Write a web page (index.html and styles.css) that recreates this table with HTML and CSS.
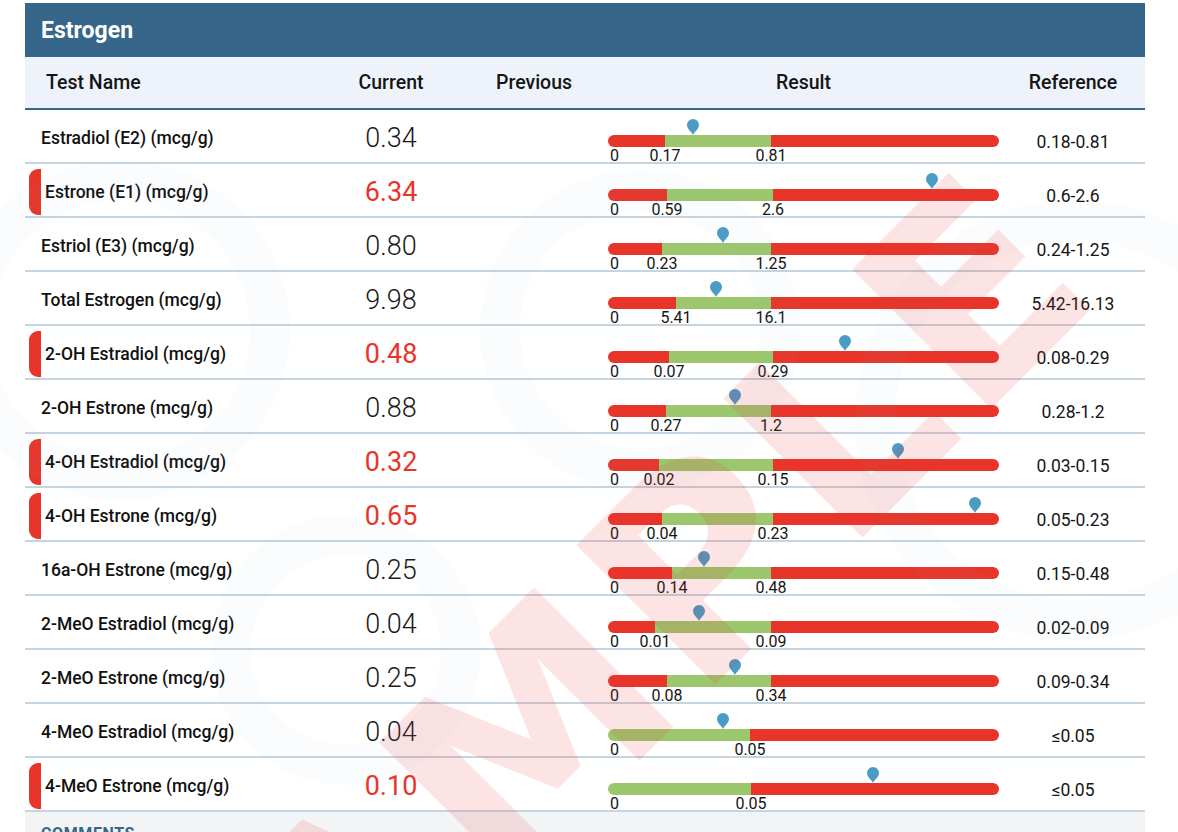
FILE: index.html
```html
<!DOCTYPE html>
<html lang="en">
<head>
<meta charset="utf-8">
<title>Estrogen</title>
<link rel="stylesheet" href="styles.css">
</head>
<body>
<div class="page">
  <section class="panel">
    <div class="panel-title">Estrogen</div>
    <div class="thead">
      <div class="th th-name">Test Name</div>
      <div class="th th-current">Current</div>
      <div class="th th-previous">Previous</div>
      <div class="th th-result">Result</div>
      <div class="th th-ref">Reference</div>
    </div>

    <div class="row">
      <div class="name"><span class="flag"></span><span class="name-text">Estradiol (E2) (mcg/g)</span></div>
      <div class="value">0.34</div>
      <div class="prev"></div>
      <div class="result"><div class="track">
        <div class="pins"><svg class="pin" style="left:85px" viewBox="0 0 12 16"><path d="M6 16C5 13 0 10.5 0 6A6 6 0 0 1 12 6C12 10.5 7 13 6 16Z"/></svg></div>
        <div class="bar"><span class="seg red" style="width:57px"></span><span class="seg green" style="width:106px"></span><span class="seg red rest"></span></div>
        <div class="ticks"><span class="tick zero">0</span><span class="tick" style="left:57px">0.17</span><span class="tick" style="left:163px">0.81</span></div>
      </div></div>
      <div class="ref">0.18-0.81</div>
    </div>

    <div class="row">
      <div class="name high-row"><span class="flag on"></span><span class="name-text">Estrone (E1) (mcg/g)</span></div>
      <div class="value high">6.34</div>
      <div class="prev"></div>
      <div class="result"><div class="track">
        <div class="pins"><svg class="pin" style="left:324px" viewBox="0 0 12 16"><path d="M6 16C5 13 0 10.5 0 6A6 6 0 0 1 12 6C12 10.5 7 13 6 16Z"/></svg></div>
        <div class="bar"><span class="seg red" style="width:59px"></span><span class="seg green" style="width:106px"></span><span class="seg red rest"></span></div>
        <div class="ticks"><span class="tick zero">0</span><span class="tick" style="left:59px">0.59</span><span class="tick" style="left:165px">2.6</span></div>
      </div></div>
      <div class="ref">0.6-2.6</div>
    </div>

    <div class="row">
      <div class="name"><span class="flag"></span><span class="name-text">Estriol (E3) (mcg/g)</span></div>
      <div class="value">0.80</div>
      <div class="prev"></div>
      <div class="result"><div class="track">
        <div class="pins"><svg class="pin" style="left:115px" viewBox="0 0 12 16"><path d="M6 16C5 13 0 10.5 0 6A6 6 0 0 1 12 6C12 10.5 7 13 6 16Z"/></svg></div>
        <div class="bar"><span class="seg red" style="width:54px"></span><span class="seg green" style="width:109px"></span><span class="seg red rest"></span></div>
        <div class="ticks"><span class="tick zero">0</span><span class="tick" style="left:54px">0.23</span><span class="tick" style="left:163px">1.25</span></div>
      </div></div>
      <div class="ref">0.24-1.25</div>
    </div>

    <div class="row">
      <div class="name"><span class="flag"></span><span class="name-text">Total Estrogen (mcg/g)</span></div>
      <div class="value">9.98</div>
      <div class="prev"></div>
      <div class="result"><div class="track">
        <div class="pins"><svg class="pin" style="left:108px" viewBox="0 0 12 16"><path d="M6 16C5 13 0 10.5 0 6A6 6 0 0 1 12 6C12 10.5 7 13 6 16Z"/></svg></div>
        <div class="bar"><span class="seg red" style="width:68px"></span><span class="seg green" style="width:95px"></span><span class="seg red rest"></span></div>
        <div class="ticks"><span class="tick zero">0</span><span class="tick" style="left:68px">5.41</span><span class="tick" style="left:163px">16.1</span></div>
      </div></div>
      <div class="ref">5.42-16.13</div>
    </div>

    <div class="row">
      <div class="name high-row"><span class="flag on"></span><span class="name-text">2-OH Estradiol (mcg/g)</span></div>
      <div class="value high">0.48</div>
      <div class="prev"></div>
      <div class="result"><div class="track">
        <div class="pins"><svg class="pin" style="left:237px" viewBox="0 0 12 16"><path d="M6 16C5 13 0 10.5 0 6A6 6 0 0 1 12 6C12 10.5 7 13 6 16Z"/></svg></div>
        <div class="bar"><span class="seg red" style="width:61px"></span><span class="seg green" style="width:104px"></span><span class="seg red rest"></span></div>
        <div class="ticks"><span class="tick zero">0</span><span class="tick" style="left:61px">0.07</span><span class="tick" style="left:165px">0.29</span></div>
      </div></div>
      <div class="ref">0.08-0.29</div>
    </div>

    <div class="row">
      <div class="name"><span class="flag"></span><span class="name-text">2-OH Estrone (mcg/g)</span></div>
      <div class="value">0.88</div>
      <div class="prev"></div>
      <div class="result"><div class="track">
        <div class="pins"><svg class="pin" style="left:127px" viewBox="0 0 12 16"><path d="M6 16C5 13 0 10.5 0 6A6 6 0 0 1 12 6C12 10.5 7 13 6 16Z"/></svg></div>
        <div class="bar"><span class="seg red" style="width:58px"></span><span class="seg green" style="width:105px"></span><span class="seg red rest"></span></div>
        <div class="ticks"><span class="tick zero">0</span><span class="tick" style="left:58px">0.27</span><span class="tick" style="left:163px">1.2</span></div>
      </div></div>
      <div class="ref">0.28-1.2</div>
    </div>

    <div class="row">
      <div class="name high-row"><span class="flag on"></span><span class="name-text">4-OH Estradiol (mcg/g)</span></div>
      <div class="value high">0.32</div>
      <div class="prev"></div>
      <div class="result"><div class="track">
        <div class="pins"><svg class="pin" style="left:290px" viewBox="0 0 12 16"><path d="M6 16C5 13 0 10.5 0 6A6 6 0 0 1 12 6C12 10.5 7 13 6 16Z"/></svg></div>
        <div class="bar"><span class="seg red" style="width:51px"></span><span class="seg green" style="width:114px"></span><span class="seg red rest"></span></div>
        <div class="ticks"><span class="tick zero">0</span><span class="tick" style="left:51px">0.02</span><span class="tick" style="left:165px">0.15</span></div>
      </div></div>
      <div class="ref">0.03-0.15</div>
    </div>

    <div class="row">
      <div class="name high-row"><span class="flag on"></span><span class="name-text">4-OH Estrone (mcg/g)</span></div>
      <div class="value high">0.65</div>
      <div class="prev"></div>
      <div class="result"><div class="track">
        <div class="pins"><svg class="pin" style="left:367px" viewBox="0 0 12 16"><path d="M6 16C5 13 0 10.5 0 6A6 6 0 0 1 12 6C12 10.5 7 13 6 16Z"/></svg></div>
        <div class="bar"><span class="seg red" style="width:54px"></span><span class="seg green" style="width:111px"></span><span class="seg red rest"></span></div>
        <div class="ticks"><span class="tick zero">0</span><span class="tick" style="left:54px">0.04</span><span class="tick" style="left:165px">0.23</span></div>
      </div></div>
      <div class="ref">0.05-0.23</div>
    </div>

    <div class="row">
      <div class="name"><span class="flag"></span><span class="name-text">16a-OH Estrone (mcg/g)</span></div>
      <div class="value">0.25</div>
      <div class="prev"></div>
      <div class="result"><div class="track">
        <div class="pins"><svg class="pin" style="left:96px" viewBox="0 0 12 16"><path d="M6 16C5 13 0 10.5 0 6A6 6 0 0 1 12 6C12 10.5 7 13 6 16Z"/></svg></div>
        <div class="bar"><span class="seg red" style="width:64px"></span><span class="seg green" style="width:99px"></span><span class="seg red rest"></span></div>
        <div class="ticks"><span class="tick zero">0</span><span class="tick" style="left:64px">0.14</span><span class="tick" style="left:163px">0.48</span></div>
      </div></div>
      <div class="ref">0.15-0.48</div>
    </div>

    <div class="row">
      <div class="name"><span class="flag"></span><span class="name-text">2-MeO Estradiol (mcg/g)</span></div>
      <div class="value">0.04</div>
      <div class="prev"></div>
      <div class="result"><div class="track">
        <div class="pins"><svg class="pin" style="left:91px" viewBox="0 0 12 16"><path d="M6 16C5 13 0 10.5 0 6A6 6 0 0 1 12 6C12 10.5 7 13 6 16Z"/></svg></div>
        <div class="bar"><span class="seg red" style="width:47px"></span><span class="seg green" style="width:116px"></span><span class="seg red rest"></span></div>
        <div class="ticks"><span class="tick zero">0</span><span class="tick" style="left:47px">0.01</span><span class="tick" style="left:163px">0.09</span></div>
      </div></div>
      <div class="ref">0.02-0.09</div>
    </div>

    <div class="row">
      <div class="name"><span class="flag"></span><span class="name-text">2-MeO Estrone (mcg/g)</span></div>
      <div class="value">0.25</div>
      <div class="prev"></div>
      <div class="result"><div class="track">
        <div class="pins"><svg class="pin" style="left:127px" viewBox="0 0 12 16"><path d="M6 16C5 13 0 10.5 0 6A6 6 0 0 1 12 6C12 10.5 7 13 6 16Z"/></svg></div>
        <div class="bar"><span class="seg red" style="width:59px"></span><span class="seg green" style="width:104px"></span><span class="seg red rest"></span></div>
        <div class="ticks"><span class="tick zero">0</span><span class="tick" style="left:59px">0.08</span><span class="tick" style="left:163px">0.34</span></div>
      </div></div>
      <div class="ref">0.09-0.34</div>
    </div>

    <div class="row">
      <div class="name"><span class="flag"></span><span class="name-text">4-MeO Estradiol (mcg/g)</span></div>
      <div class="value">0.04</div>
      <div class="prev"></div>
      <div class="result"><div class="track">
        <div class="pins"><svg class="pin" style="left:115px" viewBox="0 0 12 16"><path d="M6 16C5 13 0 10.5 0 6A6 6 0 0 1 12 6C12 10.5 7 13 6 16Z"/></svg></div>
        <div class="bar"><span class="seg green" style="width:142px"></span><span class="seg red rest"></span></div>
        <div class="ticks"><span class="tick zero">0</span><span class="tick" style="left:142px">0.05</span></div>
      </div></div>
      <div class="ref">≤0.05</div>
    </div>

    <div class="row">
      <div class="name high-row"><span class="flag on"></span><span class="name-text">4-MeO Estrone (mcg/g)</span></div>
      <div class="value high">0.10</div>
      <div class="prev"></div>
      <div class="result"><div class="track">
        <div class="pins"><svg class="pin" style="left:265px" viewBox="0 0 12 16"><path d="M6 16C5 13 0 10.5 0 6A6 6 0 0 1 12 6C12 10.5 7 13 6 16Z"/></svg></div>
        <div class="bar"><span class="seg green" style="width:143px"></span><span class="seg red rest"></span></div>
        <div class="ticks"><span class="tick zero">0</span><span class="tick" style="left:143px">0.05</span></div>
      </div></div>
      <div class="ref">≤0.05</div>
    </div>

    <div class="comments">
      <div class="comments-title">COMMENTS</div>
    </div>
  </section>
</div>

<svg class="watermark" width="1178" height="832" viewBox="0 0 1178 832" aria-hidden="true">
  <g class="wm-rings">
    <circle cx="640" cy="330" r="140"/>
    <circle cx="1075" cy="420" r="200"/>
    <circle cx="346" cy="650" r="115"/>
    <circle cx="120" cy="330" r="150"/>
  </g>
  <text class="wm-text" x="0" y="0" transform="translate(201.5 1198.5) rotate(-45)">SAMPLE</text>
</svg>
</body>
</html>
```

FILE: styles.css
```css
* {
  box-sizing: border-box;
}

html, body {
  margin: 0;
  padding: 0;
  background: #ffffff;
}

body {
  position: relative;
  width: 1178px;
  height: 832px;
  overflow: hidden;
  font-family: Roboto, "Noto Sans", "Liberation Sans", sans-serif;
  color: #161616;
}

.page {
  padding: 3px 0 0 25px;
}

.panel {
  width: 1120px;
}

.panel-title {
  height: 54px;
  display: flex;
  align-items: center;
  padding-left: 16px;
  background: #36678a;
  color: #ffffff;
  font-size: 23px;
  font-weight: 700;
}

.thead,
.row {
  display: grid;
  grid-template-columns: 305px 122px 146px 411px 136px;
}

.thead {
  height: 53px;
  align-items: center;
  background: #eef3fb;
  border-bottom: 2px solid #36678a;
  font-size: 19.5px;
  font-weight: 500;
  color: #151515;
}

.th-name {
  padding-left: 21px;
}

.th-current,
.th-result {
  text-align: center;
}

.th-previous {
  padding-left: 44px;
}

.th-ref {
  text-align: center;
  padding-right: 8px;
}

.row {
  height: 54px;
  padding-top: 4px;
  align-items: center;
  border-bottom: 2px solid #c6d4df;
}

.name {
  display: flex;
  align-items: center;
  padding-left: 4px;
  font-size: 17.5px;
  font-weight: 500;
  color: #111111;
}

.flag {
  width: 12px;
  height: 46px;
  border-radius: 9px 0 0 9px;
  background: transparent;
}

.flag.on {
  background: #e8352a;
}

.high-row .name-text {
  margin-left: 4px;
}

.value {
  text-align: center;
  font-size: 27px;
  font-weight: 300;
  line-height: 1;
  color: #1a1a1a;
}

.value.high {
  color: #e8352a;
  font-weight: 400;
}

.result {
  align-self: start;
  padding-top: 5px;
  padding-left: 10px;
}

.track {
  width: 391px;
}

.pins {
  position: relative;
  height: 16px;
}

.pin {
  position: absolute;
  top: 0;
  width: 12px;
  height: 16px;
  margin-left: -6px;
  fill: #4a9cc5;
}

.bar {
  display: flex;
  height: 12px;
  border-radius: 6px;
  overflow: hidden;
}

.seg {
  display: block;
  height: 100%;
}

.seg.red {
  background: #e8352a;
}

.seg.green {
  background: #9cc76d;
}

.seg.rest {
  flex: 1;
}

.ticks {
  position: relative;
  height: 13px;
  margin-top: 2px;
  font-size: 16px;
  line-height: 14px;
  color: #141414;
}

.tick {
  position: absolute;
  top: 0;
  transform: translateX(-50%);
  white-space: nowrap;
}

.tick.zero {
  left: 2px;
  transform: none;
}

.ref {
  text-align: center;
  padding-right: 8px;
  padding-top: 7px;
  font-size: 17.5px;
  color: #161616;
}

.comments {
  background: #f3f4f6;
  padding: 12px 16px 20px;
}

.comments-title {
  font-size: 16px;
  font-weight: 700;
  letter-spacing: 0.6px;
  color: #36678a;
  line-height: 19px;
}

.watermark {
  position: absolute;
  left: 0;
  top: 0;
  pointer-events: none;
}

.wm-rings circle {
  fill: none;
  stroke: rgba(140, 160, 185, 0.035);
  stroke-width: 40;
}

.wm-text {
  font-family: "DejaVu Sans", sans-serif;
  font-weight: 700;
  font-size: 270px;
  letter-spacing: 10px;
  fill: rgba(232, 45, 45, 0.13);
}
```
